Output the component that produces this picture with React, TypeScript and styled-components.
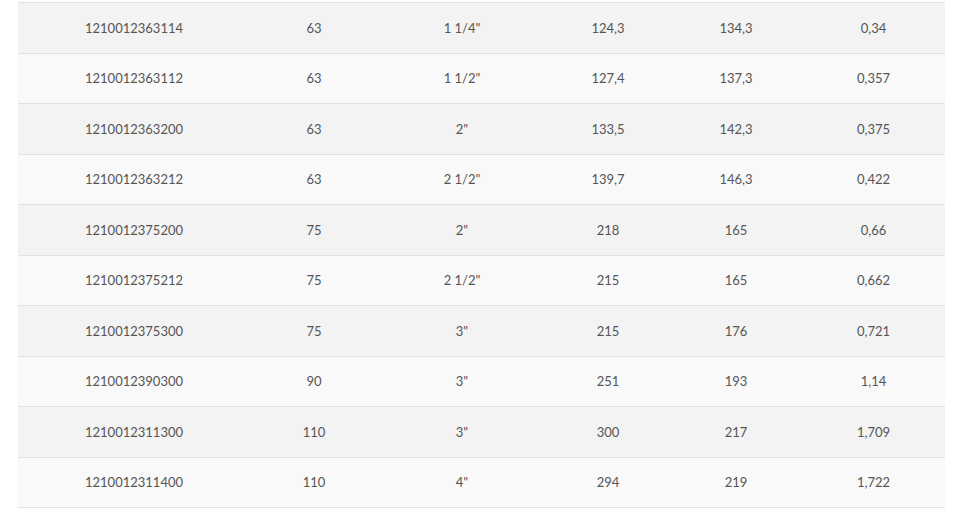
import React from "react";
import styled, { createGlobalStyle } from "styled-components";

const Global = createGlobalStyle`
  html, body { margin: 0; padding: 0; background: #ffffff; }
`;

const Wrap = styled.div`
  padding: 2px 18px 0 18px;
  width: 927px;
`;

const Table = styled.table`
  width: 927px;
  border-collapse: collapse;
  table-layout: fixed;
  font-family: Lato, "Open Sans", sans-serif;
  font-size: 13px;
  color: #555555;
`;

const Row = styled.tr<{ $odd: boolean }>`
  background: ${(p) => (p.$odd ? "#f3f3f3" : "#f9f9fa")};
  border-top: 1px solid #e2e2e2;
  border-bottom: 1px solid #e2e2e2;
`;

const Cell = styled.td`
  height: 49.5px;
  padding: 0;
  text-align: center;
  vertical-align: middle;
`;

const widths = [232, 128, 168, 124, 132, 143];

const data: string[][] = [
  ["1210012363114", "63", "1 1/4\"", "124,3", "134,3", "0,34"],
  ["1210012363112", "63", "1 1/2\"", "127,4", "137,3", "0,357"],
  ["1210012363200", "63", "2\"", "133,5", "142,3", "0,375"],
  ["1210012363212", "63", "2 1/2\"", "139,7", "146,3", "0,422"],
  ["1210012375200", "75", "2\"", "218", "165", "0,66"],
  ["1210012375212", "75", "2 1/2\"", "215", "165", "0,662"],
  ["1210012375300", "75", "3\"", "215", "176", "0,721"],
  ["1210012390300", "90", "3\"", "251", "193", "1,14"],
  ["1210012311300", "110", "3\"", "300", "217", "1,709"],
  ["1210012311400", "110", "4\"", "294", "219", "1,722"],
];

export default function App() {
  return (
    <>
      <Global />
      <Wrap>
        <Table>
          <colgroup>
            {widths.map((w, i) => (
              <col key={i} style={{ width: w }} />
            ))}
          </colgroup>
          <tbody>
            {data.map((r, i) => (
              <Row key={i} $odd={i % 2 === 0}>
                {r.map((c, j) => (
                  <Cell key={j}>{c}</Cell>
                ))}
              </Row>
            ))}
          </tbody>
        </Table>
      </Wrap>
    </>
  );
}
